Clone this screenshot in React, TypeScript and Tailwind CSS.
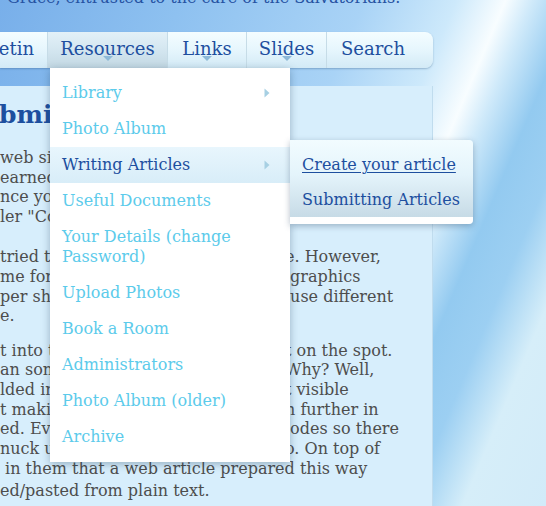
import React from 'react'

const NAV_ITEMS = [
  { label: 'Resources', width: 'w-[120px]', active: true, arrow: true },
  { label: 'Links', width: 'w-[79px]', active: false, arrow: true },
  { label: 'Slides', width: 'w-[80px]', active: false, arrow: true },
]

const MENU = [
  { label: 'Library', sub: true },
  { label: 'Photo Album' },
  { label: 'Writing Articles', sub: true, hover: true },
  { label: 'Useful Documents' },
  { label: 'Your Details (change Password)', wrap: true },
  { label: 'Upload Photos' },
  { label: 'Book a Room' },
  { label: 'Administrators' },
  { label: 'Photo Album (older)' },
  { label: 'Archive' },
]

// each line: text left of the dropdown, text right of it
const PARAS: [string, string][][] = [
  [
    ['web site', ''],
    ['earned', ''],
    ['nce you', ''],
    ['ler "Co', ''],
  ],
  [
    ['tried to', 'e. However,'],
    ['me for', '\u00a0graphics'],
    ['per sh', '\u00a0use different'],
    ['e.', ''],
  ],
  [
    ['t into the', 't on the spot.'],
    ['an some', 'Why? Well,'],
    ['lded in', 't visible'],
    ['t making', 'n further in'],
    ['ed. Even', '\u00a0odes so there'],
    ['nuck up', 'o. On top of'],
  ],
]

function RightArrow() {
  return (
    <svg width="6" height="10" viewBox="0 0 6 10" className="absolute right-[20px] top-1/2 -translate-y-1/2">
      <path d="M0.5 0.5L5.5 5L0.5 9.5Z" fill="#a7d0e3" />
    </svg>
  )
}

function DownArrow() {
  return (
    <svg width="10" height="5" viewBox="0 0 10 5" className="absolute bottom-[7px] left-1/2 -translate-x-1/2">
      <path d="M0 0H10L5 5Z" fill="#8db9d8" />
    </svg>
  )
}

function SubMenu() {
  return (
    <div className="absolute left-full top-[-7px] z-20 w-[183px] rounded-r-[4px] border-b-[7px] border-white bg-[linear-gradient(180deg,#f2fcff_0%,#e4f4fb_45%,#c7dbe6_100%)] pt-[7px] shadow-[0_2px_6px_rgba(40,70,100,0.35)]">
      <div className="flex h-9 items-center whitespace-nowrap px-3 text-[16px] text-[#1d4f9f] underline underline-offset-2">Create your article</div>
      <div className="flex h-[34px] items-center whitespace-nowrap px-3 text-[16px] text-[#1d4f9f]">Submitting Articles</div>
    </div>
  )
}

function Dropdown() {
  return (
    <div className="absolute left-[2px] top-full z-10 w-[240px] whitespace-normal bg-white py-[7px] shadow-[0_2px_8px_rgba(30,60,90,0.35)]">
      {MENU.map(item => (
        <div
          key={item.label}
          className={
            'relative flex items-center px-3 text-[16px] leading-[20px] ' +
            (item.wrap ? 'h-14 pr-[24px] ' : 'h-9 ') +
            (item.hover
              ? 'bg-[linear-gradient(180deg,#e8f6fd_0%,#d8edf8_100%)] text-[#1d4f9f]'
              : 'text-[#5ccbeb]')
          }
        >
          <span>{item.label}</span>
          {item.sub && <RightArrow />}
          {item.hover && <SubMenu />}
        </div>
      ))}
    </div>
  )
}

export default function App() {
  return (
    <div className="h-[506px] w-[546px] overflow-hidden font-['DejaVu_Serif',serif] bg-[linear-gradient(113deg,#78afea_0%,#8ec1f0_24%,#a9d3f6_48%,#cde9fb_60%,#f8fdff_66.5%,#d0eafa_70%,#93caf0_76%,#9ccff2_82%,#d6eef9_89%,#d2ebf9_100%)]">
      {/* Header strap line */}
      <p className="-mt-[12px] whitespace-nowrap pl-[7px] text-[16px] leading-[20px] text-[#2552a2]">
        Grace, entrusted to the care of the Salvatorians.
      </p>

      {/* Nav bar */}
      <nav className="relative z-10 mt-[24px] flex h-9 w-[433px] rounded-r-[8px] bg-[linear-gradient(180deg,#f4fdff_0%,#e6f6fd_50%,#d3eaf6_100%)] text-[18px] text-[#1e4f9f] shadow-[0_1px_2px_rgba(40,80,120,0.35)]">
        <div className="flex w-[48px] items-center justify-end overflow-hidden border-r border-[#c6dce7] pr-[13px] whitespace-nowrap">
          <span className="-mt-[3px]">Bulletin</span>
        </div>
        {NAV_ITEMS.map(item => (
          <div
            key={item.label}
            className={
              'relative flex items-center justify-center border-r border-[#c6dce7] whitespace-nowrap ' +
              item.width +
              (item.active ? ' bg-[linear-gradient(180deg,#e3f1f8_0%,#d2e5ef_55%,#c3d8e3_100%)]' : '')
            }
          >
            <span className="-mt-[3px]">{item.label}</span>
            {item.arrow && <DownArrow />}
            {item.active && <Dropdown />}
          </div>
        ))}
        <div className="flex flex-1 items-center pl-[14px]">
          <span className="-mt-[3px]">Search</span>
        </div>
      </nav>

      {/* Content panel */}
      <main className="mt-[18px] h-[440px] w-[433px] border-r border-[#c0dcee] bg-[#d7eefc] pt-[14px] text-[16px] leading-[19.6px] text-[#4d4d4d]">
        <h1 className="-ml-[1px] whitespace-nowrap text-[25px] font-bold leading-[30px] text-[#1d4f9f]">bmitting</h1>
        <div className="mt-[18px]">
          {PARAS.map((lines, i) => (
            <div key={i} className={i === 0 ? 'mb-[21px]' : 'mb-[15px]'}>
              {lines.map(([l, r], j) => (
                <div key={j} className="grid grid-cols-[285px_1fr] whitespace-nowrap">
                  <span className="overflow-hidden">{l}</span>
                  <span>{r}</span>
                </div>
              ))}
              {i === 2 && (
                <>
                  <div className="whitespace-nowrap pt-[1px]">&nbsp;in them that a web article prepared this way</div>
                  <div className="whitespace-nowrap pt-[2px]">ed/pasted from plain text.</div>
                </>
              )}
            </div>
          ))}
        </div>
      </main>
    </div>
  )
}
